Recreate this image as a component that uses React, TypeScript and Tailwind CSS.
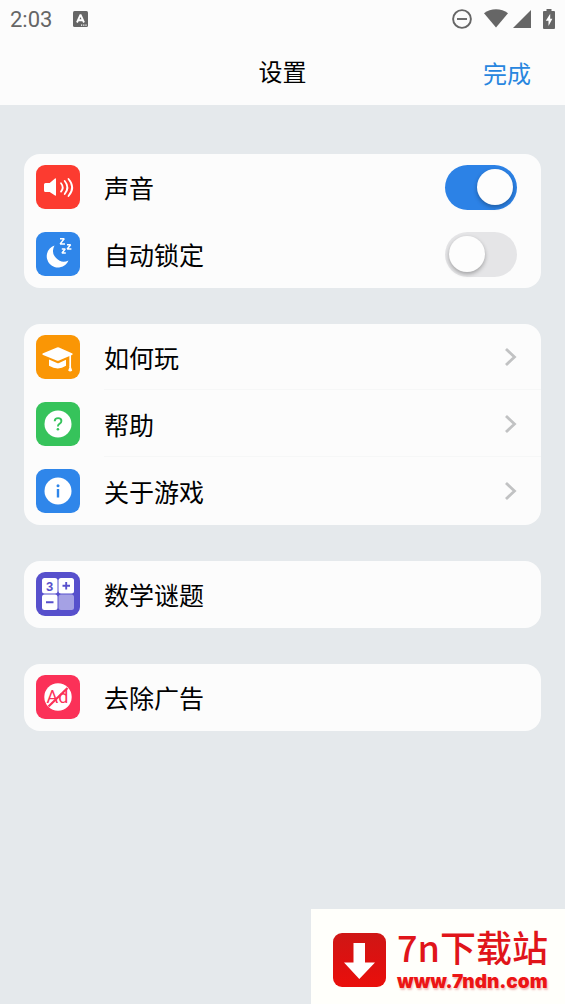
import { useState, type ReactNode } from 'react';

function StatusBar() {
  return (
    <div className="flex h-[38px] items-center justify-between pl-[10px] pr-[10px] text-[#666666]">
      <div className="flex items-center gap-[21px]">
        <span className="pt-[2px] font-['Roboto',sans-serif] text-[22px] leading-[26px]">2:03</span>
        <svg width="15" height="16" viewBox="0 0 15 16" aria-hidden="true">
          <rect width="15" height="16" rx="1.5" fill="currentColor" />
          <path d="M4 11.500 7.300 4.200h.4l3.300 7.300M5.400 9.200h4.200" fill="none" stroke="#fff" strokeWidth="1.900" />
          <path d="M8 14.200h1.200M10.200 14.200h1.200M12.400 14.200h1.200" stroke="#fff" strokeWidth="1.200" />
        </svg>
      </div>
      <div className="flex items-center">
        <svg width="20" height="20" viewBox="0 0 20 20" className="mr-3" fill="none" stroke="currentColor" strokeWidth="1.9" aria-hidden="true">
          <circle cx="10" cy="10" r="8.900" />
          <path d="M5 10h10" />
        </svg>
        <svg width="24" height="20" viewBox="0 0 24 20" className="mr-1" fill="currentColor" aria-hidden="true">
          <path d="M0 4.200C6.500-1.200 17.500-1.200 24 4.200L12 18.500Z" />
        </svg>
        <svg width="19" height="20" viewBox="0 0 19 20" className="mr-3" fill="currentColor" aria-hidden="true">
          <path d="M19 1v18H1Z" />
        </svg>
        <svg width="12" height="20" viewBox="0 0 12 20" aria-hidden="true">
          <path d="M3.500 0h5v2H11a1 1 0 0 1 1 1v16a1 1 0 0 1-1 1H1a1 1 0 0 1-1-1V3a1 1 0 0 1 1-1h2.500Z" fill="currentColor" />
          <path d="M7.200 4.800 2.800 11.800h2.700v5.200l3.900-7.200H7.200Z" fill="#fff" />
        </svg>
      </div>
    </div>
  );
}

function Tile({ color, children }: { color: string; children: ReactNode }) {
  return (
    <svg width="44" height="44" viewBox="0 0 44 44" className="shrink-0" aria-hidden="true">
      <rect width="44" height="44" rx="9" fill={color} />
      {children}
    </svg>
  );
}

const SoundIcon = () => (
  <Tile color="#fc3b30">
    <path d="M9.500 18h4.200L19 13.600q1-.7 1 .5v16q0 1.200-1 .5L13.700 27H9.500Q8 27 8 25.500v-6Q8 18 9.500 18Z" fill="#fff" />
    <g fill="none" stroke="#fff" strokeWidth="1.800" strokeLinecap="round">
      <path d="M25 18.200q3.400 4.200 0 8.400" />
      <path d="M28.700 16q5.400 6.500 0 13" />
      <path d="M32.500 14q7.400 8.500 0 17" />
    </g>
  </Tile>
);

const SleepIcon = () => (
  <Tile color="#2f86ea">
    <path d="M18.500 13.500A11.300 11.300 0 1 0 32.500 28.500 10.800 10.800 0 0 1 18.500 13.500Z" fill="#fff" />
    <g fill="none" stroke="#fff" strokeWidth="1.500" strokeLinejoin="bevel">
      <path d="M24 6.700h4.200L24.200 11.900h4.800" />
      <path d="M31 12.700h3.600L31.200 17h4.200" />
      <path d="M25.800 17h3.400L26 21h3.800" />
    </g>
  </Tile>
);

const CapIcon = () => (
  <Tile color="#fa9605">
    <path d="M6.500 18.500 21 12.500q1-.4 2 0l13.500 6v1.200L23 25.500q-1.200.5-2.400 0L6.500 19.700Z" fill="#fff" />
    <path d="M13 24.500 21 28q1 .4 2 0l7-3.200v6Q22 36 13 30.800Z" fill="#fff" />
    <path d="M34.200 20v12" stroke="#fff" strokeWidth="1.700" />
    <path d="m34.200 30 2 5.500q-2 2.200-4 0Z" fill="#fff" />
  </Tile>
);

const HelpIcon = () => (
  <Tile color="#36c35b">
    <circle cx="22" cy="22" r="13.500" fill="#fff" />
    <path d="M18.700 19.300q0-3.200 3.400-3.200 3.300 0 3.300 2.800 0 1.800-2 2.900-1.500.8-1.500 2.600" fill="none" stroke="#36c35b" strokeWidth="1.900" />
    <circle cx="21.900" cy="27.300" r="1.300" fill="#36c35b" />
  </Tile>
);

const InfoIcon = () => (
  <Tile color="#2f86ea">
    <circle cx="22" cy="22" r="13.500" fill="#fff" />
    <circle cx="22" cy="16.800" r="1.500" fill="#2f86ea" />
    <path d="M22 20v8.500" stroke="#2f86ea" strokeWidth="2.400" />
  </Tile>
);

const MathIcon = () => (
  <Tile color="#5750cc">
    <rect x="6" y="6" width="15.500" height="15.500" rx="2.500" fill="#fff" />
    <rect x="22.500" y="6" width="15.500" height="15.500" rx="2.500" fill="#fff" />
    <rect x="6" y="22.500" width="15.500" height="15.500" rx="2.500" fill="#fff" />
    <rect x="22.500" y="22.500" width="15.500" height="15.500" rx="2.500" fill="#a5a1e4" />
    <text x="13.700" y="18.500" textAnchor="middle" fill="#5750cc" className="font-['Liberation_Sans',sans-serif] text-[13px] font-bold">3</text>
    <path d="M26.500 13.800h7.500M30.200 10v7.500M10 30.200h7.500" stroke="#5750cc" strokeWidth="1.900" />
  </Tile>
);

const NoAdsIcon = () => (
  <Tile color="#fb3158">
    <circle cx="22" cy="22" r="13.700" fill="#fff" />
    <text x="21.500" y="28" textAnchor="middle" fill="#fb3158" className="font-['Roboto',sans-serif] text-[18px]">Ad</text>
    <path d="M12.500 31.500 31.500 13" stroke="#fb3158" strokeWidth="2.200" />
  </Tile>
);

function Card({ children }: { children: ReactNode }) {
  return <section className="overflow-hidden rounded-2xl bg-[#fcfcfc]">{children}</section>;
}

const rowClass = 'flex h-[67px] w-full items-center gap-6 pb-px pl-3 text-left';
const labelClass = 'flex flex-1 items-center justify-between self-stretch pr-6';

function ToggleRow({ icon, label, initial }: { icon: ReactNode; label: string; initial: boolean }) {
  const [on, setOn] = useState(initial);
  return (
    <label className={rowClass}>
      {icon}
      <span className={labelClass}>
        <span>{label}</span>
        <input
          type="checkbox"
          role="switch"
          checked={on}
          onChange={(e) => setOn(e.target.checked)}
          className="flex h-[45px] w-[72px] cursor-pointer appearance-none items-center rounded-full bg-[#e5e5e7] px-1 before:size-9 before:rounded-full before:bg-[#fdfdfd] before:shadow-[0_2px_4px_rgba(0,0,0,0.3)] before:content-[''] checked:justify-end checked:bg-[#2c82e6]"
        />
      </span>
    </label>
  );
}

function LinkRow({ icon, label, chevron = false, divider = false }: { icon: ReactNode; label: string; chevron?: boolean; divider?: boolean }) {
  return (
    <button type="button" className={rowClass}>
      {icon}
      <span className={divider ? `${labelClass} border-b border-[#f6f7f7]` : labelClass}>
        <span>{label}</span>
        {chevron && (
          <svg width="13" height="20" viewBox="0 0 13 20" fill="none" stroke="#c1c2c3" strokeWidth="2.800" aria-hidden="true">
            <path d="m2 2 8.500 8L2 18" />
          </svg>
        )}
      </span>
    </button>
  );
}

function SiteBadge() {
  return (
    <a href="#" className="absolute right-0 bottom-0 flex h-[95px] w-[254px] items-center gap-[11px] bg-[#fffffb] pt-[7px] pl-[22px] text-[#e0151a]">
      <svg width="53" height="54" viewBox="0 0 53 54" className="shrink-0" aria-hidden="true">
        <defs>
          <linearGradient id="badge" x1="0" y1="0" x2="0" y2="1">
            <stop offset="0" stopColor="#cf1715" />
            <stop offset="0.500" stopColor="#dc1110" />
            <stop offset="1" stopColor="#ea0f0b" />
          </linearGradient>
        </defs>
        <rect width="53" height="54" rx="9" fill="url(#badge)" />
        <path d="M20.500 10h11.500v19.500h10L26.300 46 11 29.500h9.500Z" fill="#fff" />
      </svg>
      <span className="flex flex-col">
        <span className="text-[36px] leading-[44px] font-medium whitespace-nowrap">7n下载站</span>
        <span className="font-['Inter',sans-serif] text-[19px] leading-[28px] font-black whitespace-nowrap text-[#ec1515] [text-shadow:1px_2px_2px_rgba(200,0,0,0.25)]">www.7ndn.com</span>
      </span>
    </a>
  );
}

export default function App() {
  return (
    <div className="relative min-h-screen bg-[#e5e9ec] font-['Noto_Sans_CJK_SC',sans-serif] text-black">
      <header className="bg-[#fcfcfc]">
        <StatusBar />
        <div className="grid h-[67px] grid-cols-3 items-center pb-[2px] text-[24px] leading-[36px]">
          <h1 className="col-start-2 text-center">设置</h1>
          <button type="button" className="justify-self-end pt-1 pr-[34px] text-[#2886df]">完成</button>
        </div>
      </header>
      <main className="flex flex-col gap-9 px-6 pt-[49px] pb-[120px] text-[25px] leading-[36px]">
        <Card>
          <ToggleRow icon={<SoundIcon />} label="声音" initial={true} />
          <ToggleRow icon={<SleepIcon />} label="自动锁定" initial={false} />
        </Card>
        <Card>
          <LinkRow icon={<CapIcon />} label="如何玩" chevron divider />
          <LinkRow icon={<HelpIcon />} label="帮助" chevron divider />
          <LinkRow icon={<InfoIcon />} label="关于游戏" chevron />
        </Card>
        <Card>
          <LinkRow icon={<MathIcon />} label="数学谜题" />
        </Card>
        <Card>
          <LinkRow icon={<NoAdsIcon />} label="去除广告" />
        </Card>
      </main>
      <SiteBadge />
    </div>
  );
}
